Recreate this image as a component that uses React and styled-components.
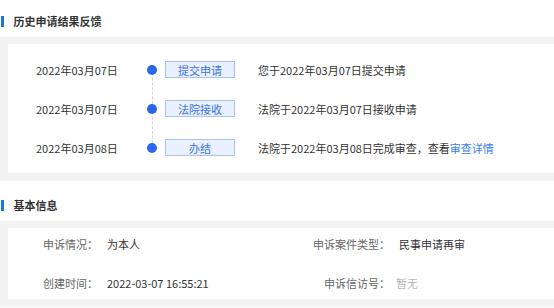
import React from "react";
import styled, { createGlobalStyle } from "styled-components";

const Global = createGlobalStyle`
  html, body { margin: 0; padding: 0; background: #fff; }
  body {
    font-family: "Noto Sans CJK SC", "Noto Sans", sans-serif;
    font-size: 11px;
    color: #333;
    overflow: hidden;
    width: 554px;
  }
`;

const Page = styled.div`
  width: 554px;
  display: flex;
  flex-direction: column;
`;

const Section = styled.section`
  display: flex;
  flex-direction: column;
  margin-top: ${(p) => p.$mt || 0}px;
`;

const Header = styled.div`
  height: 37px;
  box-sizing: border-box;
  padding: 5px 0 0 1px;
  display: flex;
  align-items: center;
  gap: 10px;
  font-size: 11px;
  font-weight: 700;
  color: #333;
  line-height: 12px;
`;

const Bar = styled.span`
  width: 2.5px;
  height: 11px;
  background: #1677e0;
`;

const Panel = styled.div`
  background: #f2f2f2;
  padding: 7px 0 ${(p) => p.$pb ?? 8}px 8px;
`;

const Card = styled.div`
  background: #fff;
  padding: ${(p) => p.$pad};
  display: flex;
  flex-direction: column;
  gap: ${(p) => p.$gap || 0}px;
  min-width: 0;
`;

const TimelineRow = styled.div`
  height: 39px;
  display: flex;
  align-items: center;
  padding-left: 28px;
`;

const DateText = styled.span`
  width: 111px;
  color: #333;
  line-height: 12px;
`;

const DotCol = styled.span`
  position: relative;
  width: 10px;
  height: 10px;
  display: flex;
  justify-content: center;
  &::after {
    content: "";
    display: ${(p) => (p.$last ? "none" : "block")};
    position: absolute;
    left: 4.5px;
    top: 13px;
    height: 26px;
    border-left: 1px dashed #d6d6d6;
  }
`;

const Dot = styled.span`
  width: 10px;
  height: 10px;
  border-radius: 50%;
  background: #2c66ec;
`;

const Tag = styled.span`
  margin-left: 8px;
  width: 70px;
  height: 17px;
  box-sizing: border-box;
  border: 1px solid #a9c2f3;
  background: #e9f0ff;
  color: #3e74e0;
  display: flex;
  align-items: center;
  justify-content: center;
  line-height: 12px;
`;

const Desc = styled.span`
  margin-left: 23px;
  color: #333;
  line-height: 12px;
`;

const Link = styled.span`
  color: #3a7bf0;
`;

const InfoRow = styled.div`
  height: 32px;
  display: grid;
  grid-template-columns: 292px 1fr;
  align-items: center;
`;

const Field = styled.div`
  display: flex;
  align-items: center;
`;

const Label = styled.span`
  width: 90px;
  text-align: right;
  color: #666;
  line-height: 12px;
  white-space: nowrap;
`;

const Value = styled.span`
  margin-left: ${(p) => p.$ml || 9}px;
  color: ${(p) => (p.$muted ? "#b8b8b8" : "#333")};
  line-height: 12px;
  white-space: nowrap;
`;

const timeline = [
  { date: "2022年03月07日", tag: "提交申请", desc: <>您于2022年03月07日提交申请</> },
  { date: "2022年03月07日", tag: "法院接收", desc: <>法院于2022年03月07日接收申请</> },
  {
    date: "2022年03月08日",
    tag: "办结",
    desc: (
      <>
        法院于2022年03月08日完成审查，查看<Link>审查详情</Link>
      </>
    ),
  },
];

export default function App() {
  return (
    <Page>
      <Global />
      <Section>
        <Header>
          <Bar />
          历史申请结果反馈
        </Header>
        <Panel $pb={8}>
          <Card $pad="6px 0">
            {timeline.map((t, i) => (
              <TimelineRow key={i}>
                <DateText>{t.date}</DateText>
                <DotCol $last={i === timeline.length - 1}>
                  <Dot />
                </DotCol>
                <Tag>{t.tag}</Tag>
                <Desc>{t.desc}</Desc>
              </TimelineRow>
            ))}
          </Card>
        </Panel>
      </Section>
      <Section $mt={3}>
        <Header>
          <Bar />
          基本信息
        </Header>
        <Panel>
          <Card $pad="0" $gap={7}>
            <InfoRow>
              <Field>
                <Label>申诉情况：</Label>
                <Value>为本人</Value>
              </Field>
              <Field>
                <Label>申诉案件类型：</Label>
                <Value>民事申请再审</Value>
              </Field>
            </InfoRow>
            <InfoRow>
              <Field>
                <Label>创建时间：</Label>
                <Value>2022-03-07 16:55:21</Value>
              </Field>
              <Field>
                <Label>申诉信访号：</Label>
                <Value $ml={6} $muted>暂无</Value>
              </Field>
            </InfoRow>
          </Card>
        </Panel>
      </Section>
    </Page>
  );
}
